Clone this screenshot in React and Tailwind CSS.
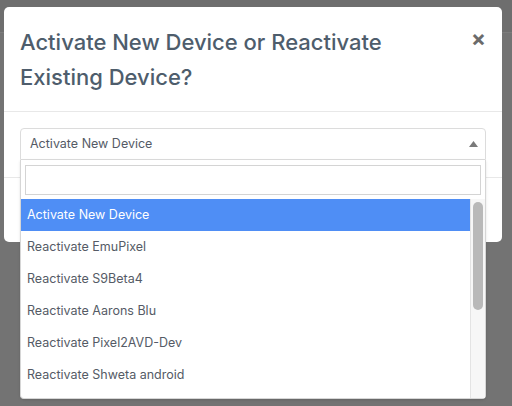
import React from "react";

const options = [
  "Activate New Device",
  "Reactivate EmuPixel",
  "Reactivate S9Beta4",
  "Reactivate Aarons Blu",
  "Reactivate Pixel2AVD-Dev",
  "Reactivate Shweta android",
];

export default function App() {
  return (
    <div
      className="relative w-[512px] h-[406px] overflow-hidden flex flex-col bg-[#737373]"
      style={{ fontFamily: "Inter, 'Liberation Sans', sans-serif" }}
    >
      {/* page behind the backdrop */}
      <div className="h-[33px] bg-[#6e6e6e] border-b border-[#7c7c7c]" />
      <div className="flex-1 bg-[#737373]" />

      {/* modal */}
      <div className="absolute left-[4px] top-[7px] w-[498px] rounded-[5px] bg-white">
        <div className="relative px-4 pt-[18px] pb-[16px] border-b border-[#e8e8e8]">
          <h2 className="text-[22px] leading-[35px] font-medium text-[#4e5d6c] pr-20">
            Activate New Device or Reactivate Existing Device?
          </h2>
          <button className="absolute right-[16px] top-[20px] text-[22px] leading-none font-bold text-[#6b6b6b]">
            ×
          </button>
        </div>

        <div className="px-4 pt-4 pb-[17px] border-b border-[#e8e8e8]">
          <div className="relative">
            <div className="h-[32px] flex items-center justify-between pl-[9px] pr-[7px] border border-[#dcdcdc] rounded-t-[4px] bg-white">
              <span className="text-[12.5px] text-[#555b66]">Activate New Device</span>
              <svg width="9" height="6" viewBox="0 0 9 6">
                <path d="M0 6 L4.5 0 L9 6 Z" fill="#7a7a7a" />
              </svg>
            </div>

            {/* dropdown */}
            <div className="absolute left-0 right-0 top-full z-10 bg-white border border-t-0 border-[#d6d6d6] rounded-b-[4px] shadow-sm">
              <div className="px-[4px] pt-[5px] pb-[4px]">
                <div className="h-[30px] border border-[#d4d4d4] bg-white" />
              </div>
              <div className="flex h-[199px] overflow-hidden">
                <div className="flex-1 flex flex-col">
                  {options.map((o, i) => (
                    <div
                      key={o}
                      className={`h-[32px] shrink-0 flex items-center px-[6px] text-[12.5px] ${
                        i === 0 ? "bg-[#4f8ef5] text-white" : "text-[#555b66]"
                      }`}
                    >
                      {o}
                    </div>
                  ))}
                </div>
                <div className="w-[15px] bg-[#f7f7f7] border-l border-[#e4e4e4] px-[2px] pt-[3px]">
                  <div className="h-[108px] rounded-full bg-[#b9b9b9]" />
                </div>
              </div>
            </div>
          </div>
        </div>

        <div className="h-[64px]" />
      </div>
    </div>
  );
}
